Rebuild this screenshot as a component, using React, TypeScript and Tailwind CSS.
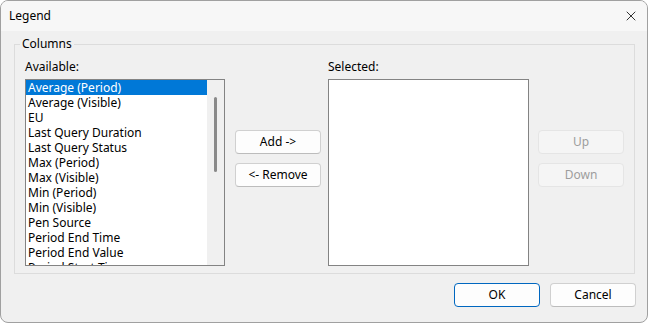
import { X } from "lucide-react";

const available = [
  "Average (Period)",
  "Average (Visible)",
  "EU",
  "Last Query Duration",
  "Last Query Status",
  "Max (Period)",
  "Max (Visible)",
  "Min (Period)",
  "Min (Visible)",
  "Pen Source",
  "Period End Time",
  "Period End Value",
  "Period Start Time",
];

function Btn({
  children,
  disabled,
  primary,
}: {
  children: React.ReactNode;
  disabled?: boolean;
  primary?: boolean;
}) {
  const cls = disabled
    ? "bg-[#f5f5f5] border-[#e5e5e5] text-[#9d9d9d]"
    : primary
    ? "bg-[#fdfdfd] border-[#0067c0] text-black"
    : "bg-[#fdfdfd] border-[#d0d0d0] border-b-[#bcbcbc] text-black";
  return (
    <button
      className={`w-[86px] h-[24px] rounded-[4px] border flex items-center justify-center leading-none ${cls}`}
    >
      {children}
    </button>
  );
}

export default function App() {
  return (
    <div
      className="w-[648px] h-[323px] flex flex-col bg-[#f0f0f0] border border-[#a0a0a0] rounded-[8px] overflow-hidden text-[12px] text-black"
      style={{ fontFamily: '"Noto Sans", "Open Sans", sans-serif' }}
    >
      {/* title bar */}
      <div className="h-[30px] shrink-0 flex items-center justify-between bg-[#f7f7f7] pl-[8px] pr-[8px]">
        <span className="leading-[16px]">Legend</span>
        <X size={16} strokeWidth={1.2} className="text-black" />
      </div>

      <div className="flex-1 flex flex-col pt-[5px] pl-[13px] pr-[11px]">
        <fieldset className="border border-[#dcdcdc] m-0 mr-[1px] p-0 h-[238px]">
          <legend className="ml-[5px] px-[2px] leading-[16px]">Columns</legend>
          <div className="flex pl-[10px] pt-[7px]">
            {/* available */}
            <div className="flex flex-col w-[200px]">
              <div className="h-[20px] leading-[15px]">Available:</div>
              <div className="h-[187px] border border-[#838383] bg-white flex overflow-hidden">
                <div className="flex-1 flex flex-col overflow-hidden">
                  {available.map((item, i) => (
                    <div
                      key={item}
                      className={`h-[15px] shrink-0 leading-[15px] pl-[2px] whitespace-nowrap ${
                        i === 0 ? "bg-[#0078d7] text-white" : ""
                      }`}
                    >
                      {item}
                    </div>
                  ))}
                </div>
                <div className="w-[17px] shrink-0 bg-[#f0f0f0] flex justify-center pt-[17px]">
                  <div className="w-[3px] h-[75px] rounded-full bg-[#8a8a8a]" />
                </div>
              </div>
            </div>

            {/* add / remove */}
            <div className="ml-[10px] flex flex-col gap-[9px] pt-[71px]">
              <Btn>Add -&gt;</Btn>
              <Btn>&lt;- Remove</Btn>
            </div>

            {/* selected */}
            <div className="ml-[7px] flex flex-col w-[201px]">
              <div className="h-[20px] leading-[15px]">Selected:</div>
              <div className="h-[187px] border border-[#838383] bg-white" />
            </div>

            {/* up / down */}
            <div className="ml-[9px] flex flex-col gap-[9px] pt-[71px]">
              <Btn disabled>Up</Btn>
              <Btn disabled>Down</Btn>
            </div>
          </div>
        </fieldset>

        <div className="flex justify-end gap-[10px] mt-[9px]">
          <Btn primary>OK</Btn>
          <Btn>Cancel</Btn>
        </div>
      </div>
    </div>
  );
}
